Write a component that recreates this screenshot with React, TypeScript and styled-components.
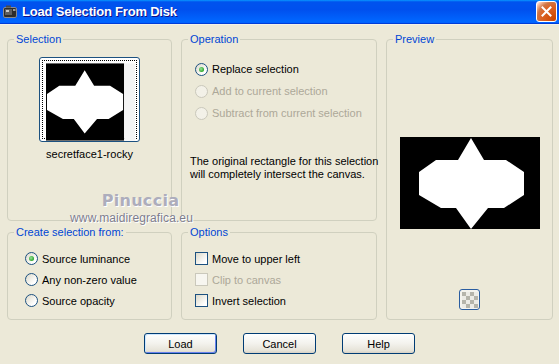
import { FC, ReactNode } from 'react';
import styled, { createGlobalStyle } from 'styled-components';

const GlobalStyle = createGlobalStyle`
  html, body {
    margin: 0;
    padding: 0;
    background: #ece9d8;
  }
  body {
    font-family: 'Liberation Sans', Arial, sans-serif;
    font-size: 11px;
    color: #000;
  }
`;

const Window = styled.div`
  position: relative;
  width: 559px;
  height: 364px;
  background: #ece9d8;
  overflow: hidden;
  display: flex;
  flex-direction: column;
`;

const TitleBar = styled.div`
  flex: none;
  height: 25px;
  box-sizing: border-box;
  display: flex;
  align-items: center;
  gap: 5px;
  padding: 0 2px 1px 3px;
  background: linear-gradient(
    180deg,
    #0997ff 0%,
    #0053ee 8%,
    #0050ee 40%,
    #0066ff 88%,
    #0066ff 93%,
    #005bff 95%,
    #003dd7 96%,
    #003dd7 100%
  );
  border-bottom: 1px solid #f4f2e8;
`;

const Title = styled.div`
  flex: 1;
  color: #fff;
  font-family: 'Liberation Sans', Arial, sans-serif;
  font-weight: bold;
  font-size: 13px;
  letter-spacing: -0.2px;
  text-shadow: 1px 1px #0f1089;
`;

const CloseButton = styled.div`
  width: 21px;
  height: 21px;
  box-sizing: border-box;
  border: 1px solid #fff;
  border-radius: 3px;
  background: radial-gradient(
    circle at 90% 90%,
    #cc4600 0%,
    #dc6527 55%,
    #cd7546 70%,
    #ffccb2 90%,
    #fff 100%
  );
  display: flex;
  align-items: center;
  justify-content: center;
`;

const Content = styled.div`
  display: grid;
  grid-template-columns: 165px 196px 167px;
  grid-template-rows: 188px 94px;
  column-gap: 9px;
  row-gap: 5px;
  padding: 8px 6px 0 7px;
`;

const Group = styled.fieldset<{ $col: number; $row: string }>`
  margin: 0;
  padding: 0;
  min-width: 0;
  border: 1px solid #d0d0bf;
  border-radius: 4px;
  display: flex;
  flex-direction: column;
  grid-column: ${(p) => p.$col};
  grid-row: ${(p) => p.$row};
`;

const Legend = styled.legend`
  margin-left: 6px;
  padding: 0 2px;
  color: #0046d5;
  font-size: 11px;
  line-height: 13px;
  white-space: nowrap;
`;

const GroupBody = styled.div<{ $pad: string }>`
  display: flex;
  flex-direction: column;
  padding: ${(p) => p.$pad};
  white-space: nowrap;
`;

const Thumb = styled.div`
  align-self: center;
  margin-top: 11px;
  width: 101px;
  height: 85px;
  box-sizing: border-box;
  border: 1px solid #1c5180;
  border-radius: 3px;
  padding: 2px;
  background: #fff;
`;

const ThumbFocus = styled.div`
  width: 100%;
  height: 100%;
  box-sizing: border-box;
  border: 1px dotted #000;
  padding: 2px 1px 1px 3px;
  display: flex;
`;

const Caption = styled.div`
  align-self: center;
  margin-top: 6px;
  line-height: 13px;
`;

const Row = styled.label<{ $h: number; $disabled?: boolean }>`
  display: flex;
  align-items: center;
  gap: 4px;
  height: ${(p) => p.$h}px;
  color: ${(p) => (p.$disabled ? '#aca899' : '#000')};
`;

const RadioDot = styled.span<{ $checked?: boolean; $disabled?: boolean }>`
  flex: none;
  width: 13px;
  height: 13px;
  box-sizing: border-box;
  border-radius: 50%;
  border: 1px solid ${(p) => (p.$disabled ? '#cac8bb' : '#1c5180')};
  background: ${(p) =>
    p.$disabled ? '#f3f1e8' : 'linear-gradient(135deg, #dcd9c9 0%, #fff 75%)'};
  display: flex;
  align-items: center;
  justify-content: center;

  &::after {
    content: '';
    display: ${(p) => (p.$checked ? 'block' : 'none')};
    width: 5px;
    height: 5px;
    border-radius: 50%;
    background: radial-gradient(circle at 40% 40%, #9be39b 0%, #21a121 75%);
  }
`;

const CheckBox = styled.span<{ $disabled?: boolean }>`
  flex: none;
  width: 13px;
  height: 13px;
  box-sizing: border-box;
  border: 1px solid ${(p) => (p.$disabled ? '#cac8bb' : '#1c5180')};
  background: ${(p) =>
    p.$disabled ? '#f7f6f0' : 'linear-gradient(135deg, #dcd9c9 0%, #fff 80%)'};
`;

const Note = styled.p`
  margin: 31px 0 0 -5px;
  line-height: 13px;
`;

const PreviewImage = styled.div`
  align-self: center;
  margin-top: 91px;
  width: 140px;
  height: 92px;
  display: flex;
`;

const SmallButton = styled.div`
  align-self: center;
  margin-top: 60px;
  width: 21px;
  height: 21px;
  box-sizing: border-box;
  border: 1px solid #2a5da0;
  border-radius: 3px;
  background: #f4f3ee;
  display: flex;
  align-items: center;
  justify-content: center;
`;

const ButtonBar = styled.div`
  display: flex;
  justify-content: center;
  gap: 26px;
  margin-top: 13px;
`;

const Button = styled.button<{ $default?: boolean }>`
  width: 73px;
  height: 21px;
  box-sizing: border-box;
  padding: 0;
  border: 1px solid #003c74;
  border-radius: 3px;
  background: linear-gradient(180deg, #fff 0%, #f3f2ed 50%, #e6e3d8 88%, #d6d0c5 100%);
  font-family: 'Liberation Sans', Arial, sans-serif;
  font-size: 11px;
  color: #000;
  box-shadow: ${(p) =>
    p.$default ? 'inset 1px 1px 0 #cee7ff, inset -1px -1px 0 #6982ee' : 'none'};
`;

const Watermark = styled.div`
  position: absolute;
  left: 71px;
  top: 191px;
  width: 121px;
  display: flex;
  flex-direction: column;
  align-items: center;
  pointer-events: none;
`;

const WatermarkName = styled.span`
  margin-left: 18px;
  font-family: 'DejaVu Sans', sans-serif;
  font-weight: bold;
  font-size: 16px;
  letter-spacing: 0.3px;
  color: #adadbc;
  text-shadow: 1px 1px 0 #fff;
  line-height: 20px;
`;

const WatermarkUrl = styled.span`
  font-family: 'Liberation Sans', Arial, sans-serif;
  font-size: 12px;
  letter-spacing: 0.1px;
  color: #7c7c8c;
  text-shadow: 0 0 1px #fff, 1px 1px 0 #fff;
  line-height: 14px;
`;

const SHAPE =
  '71,1 58,23 36,23 19,35 19,58 41,71 56,71 71,92 88,71 104,71 124,58 124,35 106,23 84,23';

const AppIcon: FC = () => (
  <svg width="14" height="14" viewBox="0 0 14 14">
    <rect x="0.5" y="2.5" width="13" height="10" rx="1.5" fill="#2c2c2c" stroke="#8a8a8a" />
    <rect x="2" y="4" width="7" height="6" fill="#5e5e5e" />
    <rect x="3" y="5" width="3" height="2" fill="#c8c8c8" />
    <rect x="10" y="4" width="2.5" height="2" fill="#9a9a9a" />
    <rect x="3" y="0.5" width="5" height="2" fill="#4a4a4a" />
  </svg>
);

const CloseIcon: FC = () => (
  <svg width="11" height="11" viewBox="0 0 11 11">
    <path d="M1.5 1.5 L9.5 9.5 M9.5 1.5 L1.5 9.5" stroke="#fff" strokeWidth="2" strokeLinecap="square" />
  </svg>
);

const Radio: FC<{ checked?: boolean; disabled?: boolean; h: number; children: ReactNode }> = ({
  checked,
  disabled,
  h,
  children,
}) => (
  <Row $h={h} $disabled={disabled}>
    <RadioDot $checked={checked} $disabled={disabled} />
    {children}
  </Row>
);

const Check: FC<{ disabled?: boolean; children: ReactNode }> = ({ disabled, children }) => (
  <Row $h={21} $disabled={disabled}>
    <CheckBox $disabled={disabled} />
    {children}
  </Row>
);

const App: FC = () => (
  <Window>
    <GlobalStyle />
    <TitleBar>
      <AppIcon />
      <Title>Load Selection From Disk</Title>
      <CloseButton>
        <CloseIcon />
      </CloseButton>
    </TitleBar>

    <Content>
      <Group $col={1} $row="1">
        <Legend>Selection</Legend>
        <Thumb>
          <ThumbFocus>
            <svg width="90" height="78" viewBox="0 0 90 78">
              <rect width="79" height="78" fill="#000" />
              <g transform="translate(1 7) scale(0.733 0.703) translate(-19 -1)">
                <polygon points={SHAPE} fill="#fff" />
              </g>
              <rect x="79" width="11" height="78" fill="#f4f4f4" />
            </svg>
          </ThumbFocus>
        </Thumb>
        <Caption>secretface1-rocky</Caption>
      </Group>

      <Group $col={2} $row="1">
        <Legend>Operation</Legend>
        <GroupBody $pad="12px 0 0 13px">
          <Radio h={22} checked>
            Replace selection
          </Radio>
          <Radio h={22} disabled>
            Add to current selection
          </Radio>
          <Radio h={22} disabled>
            Subtract from current selection
          </Radio>
          <Note>
            The original rectangle for this selection
            <br />
            will completely intersect the canvas.
          </Note>
        </GroupBody>
      </Group>

      <Group $col={3} $row="1 / 3">
        <Legend>Preview</Legend>
        <PreviewImage>
          <svg width="140" height="92" viewBox="0 0 140 92">
            <rect width="140" height="92" fill="#000" />
            <polygon points={SHAPE} fill="#fff" />
          </svg>
        </PreviewImage>
        <SmallButton>
          <svg width="16" height="16" viewBox="0 0 16 16">
            <rect width="16" height="16" fill="#ecebe6" />
            {[0, 1, 2, 3].flatMap((r) =>
              [0, 1, 2, 3]
                .filter((c) => (r + c) % 2 === 0)
                .map((c) => (
                  <rect key={`${r}-${c}`} x={c * 4} y={r * 4} width="4" height="4" fill="#b5b4ab" />
                )),
            )}
          </svg>
        </SmallButton>
      </Group>

      <Group $col={1} $row="2">
        <Legend>Create selection from:</Legend>
        <GroupBody $pad="9px 0 0 17px">
          <Radio h={21} checked>
            Source luminance
          </Radio>
          <Radio h={21}>Any non-zero value</Radio>
          <Radio h={21}>Source opacity</Radio>
        </GroupBody>
      </Group>

      <Group $col={2} $row="2">
        <Legend>Options</Legend>
        <GroupBody $pad="9px 0 0 13px">
          <Check>Move to upper left</Check>
          <Check disabled>Clip to canvas</Check>
          <Check>Invert selection</Check>
        </GroupBody>
      </Group>
    </Content>

    <ButtonBar>
      <Button $default>Load</Button>
      <Button>Cancel</Button>
      <Button>Help</Button>
    </ButtonBar>

    <Watermark>
      <WatermarkName>Pinuccia</WatermarkName>
      <WatermarkUrl>www.maidiregrafica.eu</WatermarkUrl>
    </Watermark>
  </Window>
);

export default App;
